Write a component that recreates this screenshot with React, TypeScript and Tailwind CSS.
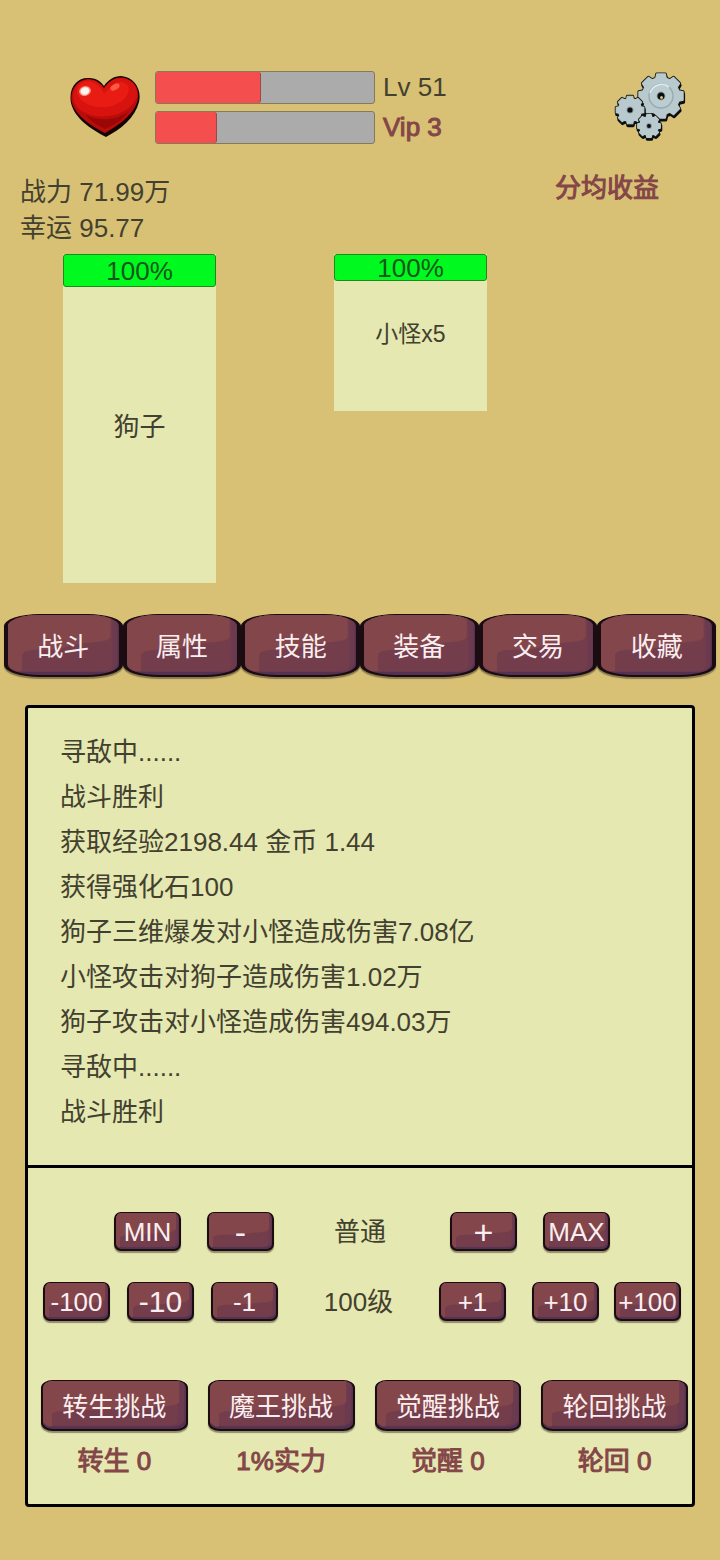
import type { ReactNode } from "react";
import clsx from "clsx";

const TABS = ["战斗", "属性", "技能", "装备", "交易", "收藏"];

const LOG = [
  "寻敌中......",
  "战斗胜利",
  "获取经验2198.44 金币 1.44",
  "获得强化石100",
  "狗子三维爆发对小怪造成伤害7.08亿",
  "小怪攻击对狗子造成伤害1.02万",
  "狗子攻击对小怪造成伤害494.03万",
  "寻敌中......",
  "战斗胜利",
];

const CHALLENGES = [
  { label: "转生挑战", note: "转生 0" },
  { label: "魔王挑战", note: "1%实力" },
  { label: "觉醒挑战", note: "觉醒 0" },
  { label: "轮回挑战", note: "轮回 0" },
];

const FLAT_SHINE = "M0 0H105V26Q104 31 92 32C74 33 62 35 50 36C34 37 12 34 7 41V57H4L0 52Z";

const SKINS = {
  tab: {
    box: "h-[63px] w-full rounded-[36px/12px] border-x-4 border-t border-b-2 pt-1",
    shine: "M0 0H102V22Q101 26 88 27C72 28 62 31 50 34C38 36 16 32 14 40V56H8Q1 54 0 48Z",
  },
  small: {
    box: "h-[39px] w-[67px] rounded-[7px] border-x-2 border-t border-b-2 pt-px",
    shine: FLAT_SHINE,
  },
  wide: {
    box: "h-[51px] w-full rounded-[12px/8px] border-x-2 border-t border-b-2 pt-1",
    shine: FLAT_SHINE,
  },
};

type GameButtonProps = {
  skin: keyof typeof SKINS;
  children: ReactNode;
  className?: string;
};

function GameButton({ skin, children, className }: GameButtonProps) {
  return (
    <button
      type="button"
      className={clsx(
        "relative flex items-center justify-center overflow-hidden whitespace-nowrap border-[#1a0c10] bg-[#553350] text-[#fbeef0] shadow-[0_2px_1px_rgba(60,50,40,0.5)]",
        SKINS[skin].box,
        className,
      )}
    >
      <svg
        className="absolute inset-0 h-full w-full"
        viewBox="0 0 110 60"
        preserveAspectRatio="none"
        aria-hidden="true"
      >
        <path d="M0 0H107Q110 3 109 10V48Q108 57 96 57H12Q2 57 0 50Z" fill="#6b3a4f" />
        <path d="M0 0H104V50Q104 56 92 56H12Q2 56 0 48Z" fill="#743d4c" />
        <path d={SKINS[skin].shine} fill="#83464b" />
      </svg>
      <span className="relative">{children}</span>
    </button>
  );
}

function StatBar({ label, value }: { label: string; value: number }) {
  return (
    <div
      role="progressbar"
      aria-label={label}
      aria-valuenow={value}
      className="h-[33px] w-[220px] overflow-hidden rounded-[3px] border border-[#857a58] bg-[#ababab]"
    >
      <div
        className="h-full rounded-r-[3px] border-r border-[#9a4a40] bg-[#f54e4e]"
        style={{ width: `${value}%` }}
      />
    </div>
  );
}

type FighterProps = { name: string; className: string; barClass: string; nameClass: string };

function Fighter({ name, className, barClass, nameClass }: FighterProps) {
  return (
    <div className={clsx("flex w-[153px] flex-col bg-[#e5e8b1]", className)}>
      <div
        className={clsx(
          "flex items-center justify-center rounded-[3px] border border-[#1d8a1c] bg-[#00f91f] text-[#14571a]",
          barClass,
        )}
      >
        100%
      </div>
      <div className={clsx("flex flex-1 items-center justify-center", nameClass)}>{name}</div>
    </div>
  );
}

function Heart() {
  return (
    <svg className="h-[64px] w-[72px]" viewBox="0 0 72 64" aria-hidden="true">
      <path
        d="M37 62C22 54 6 44 2 28C-1 12 9 2 20 3C28 3 32 7 35 11C39 5 45 1 52 1C65 2 73 14 70 27C66 43 52 54 37 62Z"
        fill="#150403"
      />
      <path
        d="M36 58C24 52 6 41 2.5 26C1 13 10 4 20 4C28 5 32 9 35 13C39 7 45 2.5 52 2.5C65 3.5 71.500 14 68.500 26C64 41 48 51 36 58Z"
        fill="#b90d0b"
      />
      <path
        d="M35 14C39 7 45 3 52 3C64 4 71 14 67 24C59 41 33 45 19 39C9 36 4 29 4 20C5 10 11 5 20 5C28 5 32 9 35 14Z"
        fill="#d8120f"
      />
      <path
        d="M35 19C41 12 46 7 53 7C60 9 62 15 57 22C48 33 30 35 18 29C8 24 6 15 10 10C14 6 20 5 25 8C30 10 33 14 35 19Z"
        fill="#e81c12"
      />
      <path d="M17 40C30 47 48 45 59 37C54 45 45 50 36 54C28 50 21 46 17 40Z" fill="#9a0706" />
      <ellipse cx="16" cy="16" rx="6" ry="5" fill="#ff8a78" transform="rotate(-15 16 16)" />
      <ellipse cx="16" cy="16" rx="4.5" ry="3.8" fill="#fff3ee" transform="rotate(-15 16 16)" />
      <ellipse cx="46" cy="12" rx="5" ry="2.8" fill="#ff5a42" transform="rotate(-30 46 12)" />
    </svg>
  );
}

function gearPath(cx: number, cy: number, outer: number, inner: number) {
  const teeth = 8;
  const points: string[] = [];
  for (let i = 0; i < teeth; i++) {
    const mid = (i / teeth) * Math.PI * 2 - Math.PI / 2;
    for (const [offset, r] of [[-0.29, inner], [-0.19, outer], [0.19, outer], [0.29, inner]]) {
      const a = mid + offset;
      points.push(`${(cx + r * Math.cos(a)).toFixed(2)} ${(cy + r * Math.sin(a)).toFixed(2)}`);
    }
  }
  return `M${points.join("L")}Z`;
}

const GEARS = [
  { cx: 48, cy: 25, outer: 22.5, inner: 18.5, hole: 3.5 },
  { cx: 17, cy: 39, outer: 14, inner: 11.5, hole: 2.6 },
  { cx: 36, cy: 55, outer: 11.5, inner: 9.3, hole: 2 },
];

function Gears() {
  return (
    <svg className="h-[72px] w-[74px]" viewBox="0 0 74 72" aria-hidden="true">
      {GEARS.map((g) => {
        const d = gearPath(g.cx, g.cy, g.outer, g.inner);
        return (
          <g key={g.cx} strokeLinejoin="round">
            <path d={d} transform="translate(0.5 2)" fill="#0b0d0d" stroke="#0b0d0d" strokeWidth="3" />
            <path d={d} fill="#b9cace" stroke="#15191a" strokeWidth="3" />
            <path d={d} fill="#b9cace" stroke="#b9cace" strokeWidth="1.2" />
            {g.outer > 20 && (
              <>
                <circle cx={g.cx} cy={g.cy} r="12" fill="#bccdd2" stroke="#98aab0" strokeWidth="1.4" />
                <path d="M37 22A12 12 0 0 1 56 16" fill="none" stroke="#e0eaec" strokeWidth="1.6" />
              </>
            )}
            <circle cx={g.cx} cy={g.cy} r={g.hole + 0.9} fill="#8c9da2" />
            <circle cx={g.cx} cy={g.cy} r={g.hole} fill="#0b0d0d" />
          </g>
        );
      })}
      <circle cx="48.5" cy="26.5" r="1.5" fill="#d8c174" />
    </svg>
  );
}

export default function App() {
  return (
    <main className="min-h-screen bg-[#d8c174] pt-[71px] pb-[52px] font-['Liberation_Sans','Noto_Sans_CJK_SC',sans-serif] text-[26px] leading-[36px] text-[#42402f]">
      <header className="flex h-[73px] items-start pr-[33px] pl-[69px]">
        <div className="mt-1 mr-[14px]">
          <Heart />
        </div>
        <div className="flex flex-col gap-[7px]">
          <StatBar label="经验" value={48} />
          <StatBar label="Vip" value={28} />
        </div>
        <div className="ml-2 flex flex-col gap-[7px] leading-[33px]">
          <span>Lv 51</span>
          <span className="text-[#844648] [-webkit-text-stroke:1px_#844648]">Vip 3</span>
        </div>
        <button type="button" aria-label="设置" className="ml-auto">
          <Gears />
        </button>
      </header>

      <section className="mt-[30px] flex items-start justify-between pr-[61px] pl-5">
        <div>
          <p>战力 71.99万</p>
          <p>幸运 95.77</p>
        </div>
        <button
          type="button"
          className="leading-[28px] text-[#844648] [-webkit-text-stroke:1px_#844648]"
        >
          分均收益
        </button>
      </section>

      <section className="mt-2 flex items-start gap-[118px] pl-[63px]">
        <Fighter name="狗子" className="h-[329px]" barClass="h-[33px]" nameClass="pb-4" />
        <Fighter name="小怪x5" className="h-[157px]" barClass="h-[27px]" nameClass="pb-6 text-[23px]" />
      </section>

      <nav className="mt-[31px] grid grid-cols-6 px-1">
        {TABS.map((tab) => (
          <GameButton key={tab} skin="tab">
            {tab}
          </GameButton>
        ))}
      </nav>

      <section className="mx-[25px] mt-7 rounded-[4px] border-[3px] border-black bg-[#e5e8b1]">
        <ul className="border-b-[3px] border-black pt-[22px] pb-[30px] pl-8 leading-[45px]">
          {LOG.map((line, i) => (
            <li key={i}>{line}</li>
          ))}
        </ul>

        <div className="pt-11 pb-[25px]">
          <div className="flex items-center justify-center pl-1">
            <div className="flex gap-[26px]">
              <GameButton skin="small">MIN</GameButton>
              <GameButton skin="small" className="text-[34px]">-</GameButton>
            </div>
            <span className="w-[176px] pr-1 text-center">普通</span>
            <div className="flex gap-[26px]">
              <GameButton skin="small" className="text-[34px]">+</GameButton>
              <GameButton skin="small">MAX</GameButton>
            </div>
          </div>

          <div className="mt-[31px] flex items-center justify-between pr-[11px] pl-[15px]">
            <div className="flex gap-[17px]">
              <GameButton skin="small">-100</GameButton>
              <GameButton skin="small" className="text-[30px]">-10</GameButton>
              <GameButton skin="small">-1</GameButton>
            </div>
            <span>100级</span>
            <div className="flex gap-[26px]">
              <GameButton skin="small">+1</GameButton>
              <div className="flex gap-[15px]">
                <GameButton skin="small">+10</GameButton>
                <GameButton skin="small">+100</GameButton>
              </div>
            </div>
          </div>

          <div className="mt-[59px] grid grid-cols-4 gap-5 pr-1 pl-[13px]">
            {CHALLENGES.map((c) => (
              <div key={c.label} className="flex flex-col items-center gap-3">
                <GameButton skin="wide">{c.label}</GameButton>
                <span className="text-[#844648] [-webkit-text-stroke:1px_#844648]">{c.note}</span>
              </div>
            ))}
          </div>
        </div>
      </section>
    </main>
  );
}
